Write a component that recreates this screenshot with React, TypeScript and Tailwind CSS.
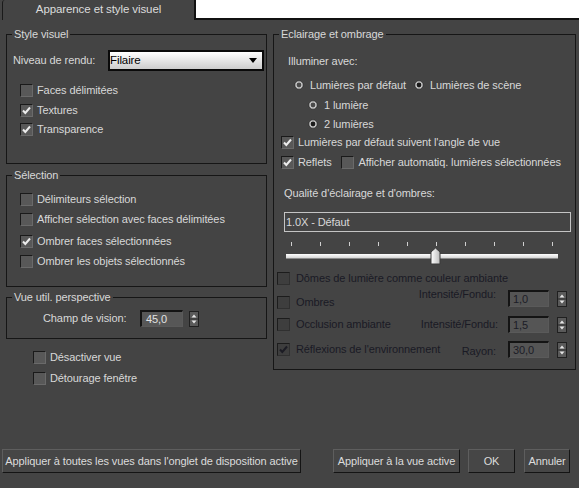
import React from 'react';

function CheckBox({ checked, dim }: { checked?: boolean; dim?: boolean }) {
  return (
    <span
      className={
        dim
          ? 'flex h-[13px] w-[13px] shrink-0 items-center justify-center border border-t-[#1c1c1c] border-l-[#1c1c1c] border-b-[#303030] border-r-[#303030] bg-[#3e3e3e]'
          : 'flex h-[13px] w-[13px] shrink-0 items-center justify-center border border-t-[#1a1a1a] border-l-[#1a1a1a] border-b-[#6a6a6a] border-r-[#6a6a6a] bg-[#585858]'
      }
    >
      {checked && (
        <svg width="11" height="11" viewBox="0 0 11 11">
          <path d="M2 5.5 L4.3 8 L9 2.5" fill="none" stroke={dim ? '#1c1c24' : '#ececec'} strokeWidth="2" />
        </svg>
      )}
    </span>
  );
}

function Radio({ checked }: { checked?: boolean }) {
  return (
    <svg width="10" height="10" viewBox="0 0 10 10" className="shrink-0">
      <circle cx="5" cy="5" r="4.2" fill="#cfcfcf" stroke="#2a2a2a" strokeWidth="0.8" />
      <circle cx="5" cy="5" r="2.4" fill={checked ? '#1a1a1a' : '#4a4a4a'} />
    </svg>
  );
}

function Spinner() {
  return (
    <svg width="10" height="16" viewBox="0 0 10 16" className="shrink-0">
      <rect x="0.5" y="0.5" width="9" height="15" fill="#5a5a5a" stroke="#202020" />
      <polygon points="2.5,6.5 5,3.5 7.5,6.5" fill="#e6e6e6" />
      <line x1="1" y1="8" x2="9" y2="8" stroke="#2a2a2a" />
      <polygon points="2.5,9.5 7.5,9.5 5,12.5" fill="#e6e6e6" />
    </svg>
  );
}

function SpinField({ value, dim }: { value: string; dim?: boolean }) {
  return (
    <div className="flex items-center">
      <div
        className={
          dim
            ? 'flex h-[17px] w-[41px] items-center border-t-2 border-l-2 border-b border-r border-t-[#141414] border-l-[#141414] border-b-[#5a5a5a] border-r-[#5a5a5a] bg-[#555555] pl-[3px] text-[#1c1c26]'
            : 'flex h-[17px] w-[43px] items-center border-t-2 border-l-2 border-b border-r border-t-[#141414] border-l-[#141414] border-b-[#5a5a5a] border-r-[#5a5a5a] bg-[#575757] pl-[4px] text-[#e2e2e2]'
        }
      >
        {value}
      </div>
      <span className={dim ? 'ml-[8px] flex' : 'ml-[6px] flex'}>
        <Spinner />
      </span>
    </div>
  );
}

function Button({ label, w }: { label: string; w: string }) {
  return (
    <div
      className={`flex h-[24px] items-center justify-center border border-t-[#5e5e5e] border-l-[#5e5e5e] border-b-[#141414] border-r-[#141414] bg-[#464646] text-[#dcdcdc] ${w}`}
    >
      {label}
    </div>
  );
}

export default function App() {
  const ticks = Array.from({ length: 10 });
  return (
    <div className="flex h-[488px] w-[579px] flex-col overflow-hidden bg-[#444444] font-['Liberation_Sans',Arial,sans-serif] text-[11px] tracking-[-0.1px] text-[#d8d8d8]">
      {/* Tab bar */}
      <div className="flex h-[20px] shrink-0">
        <div className="ml-[2px] flex w-[192px] items-center justify-center rounded-tl-[3px] border-l border-[#1a1a1a] text-[11.5px] text-[#dcdcdc]">
          Apparence et style visuel
        </div>
        <div className="flex-1 border-b-2 border-l-2 border-[#111111] bg-white" />
      </div>

      {/* Main */}
      <div className="flex gap-[6px] pl-[6px] pt-[7px]">
        {/* Left column */}
        <div className="flex w-[261px] flex-col">
          <fieldset className="h-[137px] border border-[#161616]">
            <legend className="ml-[5px] px-[2px] leading-[14px]">Style visuel</legend>
            <div className="mt-[9px] flex h-[21px] items-center pl-[6px]">
              <span>Niveau de rendu:</span>
              <div className="ml-auto mr-[2px] flex h-[21px] w-[156px] items-center justify-between border-2 border-[#0a0a0a] bg-linear-to-b from-white to-[#cdcdcd] pr-[5px] text-[11.5px] text-black">
                <span>Filaire</span>
                <svg width="8" height="5" viewBox="0 0 8 5">
                  <polygon points="0,0 8,0 4,5" fill="#000" />
                </svg>
              </div>
            </div>
            <div className="mt-[9px] flex flex-col">
              <div className="flex h-[20px] items-center gap-[4px] pl-[13px]">
                <CheckBox />
                <span>Faces délimitées</span>
              </div>
              <div className="flex h-[20px] items-center gap-[4px] pl-[13px]">
                <CheckBox checked />
                <span>Textures</span>
              </div>
              <div className="flex h-[19px] items-center gap-[4px] pl-[13px]">
                <CheckBox checked />
                <span>Transparence</span>
              </div>
            </div>
          </fieldset>

          <fieldset className="mt-[4px] h-[119px] border border-[#161616]">
            <legend className="ml-[5px] px-[2px] leading-[14px]">Sélection</legend>
            <div className="mt-[7px] flex flex-col">
              <div className="flex h-[20px] items-center gap-[4px] pl-[13px]">
                <CheckBox />
                <span>Délimiteurs sélection</span>
              </div>
              <div className="flex h-[20px] items-center gap-[4px] pl-[13px]">
                <CheckBox />
                <span>Afficher sélection avec faces délimitées</span>
              </div>
              <div className="mt-[2px] flex h-[20px] items-center gap-[4px] pl-[13px]">
                <CheckBox checked />
                <span>Ombrer faces sélectionnées</span>
              </div>
              <div className="flex h-[20px] items-center gap-[4px] pl-[13px]">
                <CheckBox />
                <span>Ombrer les objets sélectionnés</span>
              </div>
            </div>
          </fieldset>

          <fieldset className="mt-[3px] h-[49px] border border-[#161616]">
            <legend className="ml-[5px] px-[2px] leading-[14px]">Vue util. perspective</legend>
            <div className="mt-[6px] flex h-[17px] items-center pl-[36px]">
              <span className="w-[97px]">Champ de vision:</span>
              <SpinField value="45,0" />
            </div>
          </fieldset>

          <div className="mt-[8px] flex flex-col">
            <div className="flex h-[21px] items-center gap-[4px] pl-[27px]">
              <CheckBox />
              <span>Désactiver vue</span>
            </div>
            <div className="flex h-[21px] items-center gap-[4px] pl-[27px]">
              <CheckBox />
              <span>Détourage fenêtre</span>
            </div>
          </div>
        </div>

        {/* Right column */}
        <fieldset className="h-[343px] w-[303px] border border-[#161616]">
          <legend className="ml-[5px] px-[2px] leading-[14px]">Eclairage et ombrage</legend>
          <div className="flex flex-col">
            <div className="mt-[13px] flex h-[14px] items-center pl-[14px]">Illuminer avec:</div>
            <div className="mt-[9px] flex h-[16px] items-center pl-[20px]">
              <Radio />
              <span className="ml-[6px]">Lumières par défaut</span>
              <span className="ml-[8px] flex">
                <Radio checked />
              </span>
              <span className="ml-[6px]">Lumières de scène</span>
            </div>
            <div className="mt-[4px] flex h-[16px] items-center gap-[6px] pl-[34px]">
              <Radio />
              <span>1 lumière</span>
            </div>
            <div className="mt-[3px] flex h-[16px] items-center gap-[6px] pl-[34px]">
              <Radio checked />
              <span>2 lumières</span>
            </div>
            <div className="mt-[2px] flex h-[16px] items-center gap-[4px] pl-[7px]">
              <CheckBox checked />
              <span>Lumières par défaut suivent l'angle de vue</span>
            </div>
            <div className="mt-[4px] flex h-[16px] items-center pl-[7px]">
              <CheckBox checked />
              <span className="ml-[4px]">Reflets</span>
              <span className="ml-[9px] flex">
                <CheckBox />
              </span>
              <span className="ml-[5px]">Afficher automatiq. lumières sélectionnées</span>
            </div>
            <div className="mt-[16px] flex h-[14px] items-center pl-[10px]">Qualité d'éclairage et d'ombres:</div>
            <div className="ml-[10px] mt-[12px] flex h-[20px] w-[287px] items-center border border-[#c4c4c4] pl-[1px]">
              1.0X - Défaut
            </div>
            <div className="relative mt-[8px] h-[26px]">
              <div className="ml-[17px] mt-[2px] flex h-[4px] w-[262px] justify-between">
                {ticks.map((_, i) => (
                  <span key={i} className="h-[4px] w-[1px] bg-[#d0d0d0]" />
                ))}
              </div>
              <div className="ml-[12px] mt-[8px] h-[5px] w-[272px] border-b border-[#8a8a8a] bg-linear-to-b from-white to-[#d6d6d6]" />
              <svg width="11" height="18" viewBox="0 0 11 18" className="absolute left-[156px] top-[7px]">
                <defs>
                  <linearGradient id="thumb" x1="0" y1="0" x2="1" y2="0">
                    <stop offset="0" stopColor="#ffffff" />
                    <stop offset="1" stopColor="#bdbdbd" />
                  </linearGradient>
                </defs>
                <path d="M1 5 L5.5 1 L10 5 V17 H1 Z" fill="url(#thumb)" stroke="#3a3a3a" strokeWidth="1" />
              </svg>
            </div>
            <div className="mt-[4px] flex h-[16px] items-center gap-[6px] pl-[3px] text-[#1a1a24]">
              <CheckBox dim />
              <span>Dômes de lumière comme couleur ambiante</span>
            </div>
            <div className="mt-[4px] flex h-[17px] items-start pl-[3px] pr-[8px] text-[#1a1a24]">
              <div className="mt-[4px] flex h-[16px] items-center gap-[6px]">
                <CheckBox dim />
                <span>Ombres</span>
              </div>
              <div className="ml-auto flex h-[17px] items-center">
                <span className="-mt-[8px] mr-[12px]">Intensité/Fondu:</span>
                <SpinField value="1,0" dim />
              </div>
            </div>
            <div className="mt-[9px] flex h-[17px] items-center pl-[3px] pr-[8px] text-[#1a1a24]">
              <div className="flex h-[16px] items-center gap-[6px]">
                <CheckBox dim />
                <span>Occlusion ambiante</span>
              </div>
              <div className="ml-auto flex h-[17px] items-center">
                <span className="mr-[10px]">Intensité/Fondu:</span>
                <SpinField value="1,5" dim />
              </div>
            </div>
            <div className="mt-[8px] flex h-[17px] items-center pl-[3px] pr-[8px] text-[#1a1a24]">
              <div className="flex h-[16px] items-center gap-[6px]">
                <CheckBox checked dim />
                <span>Réflexions de l'environnement</span>
              </div>
              <div className="ml-auto flex h-[17px] items-center">
                <span className="mr-[12px] mt-[3px]">Rayon:</span>
                <SpinField value="30,0" dim />
              </div>
            </div>
          </div>
        </fieldset>
      </div>

      {/* Bottom buttons */}
      <div className="mt-auto flex items-center pb-[15px] pl-[2px] pr-[9px]">
        <Button label="Appliquer à toutes les vues dans l'onglet de disposition active" w="w-[299px]" />
        <div className="ml-auto flex items-center">
          <Button label="Appliquer à la vue active" w="w-[127px]" />
          <span className="ml-[8px] flex">
            <Button label="OK" w="w-[47px]" />
          </span>
          <span className="ml-[9px] flex">
            <Button label="Annuler" w="w-[46px]" />
          </span>
        </div>
      </div>
    </div>
  );
}
